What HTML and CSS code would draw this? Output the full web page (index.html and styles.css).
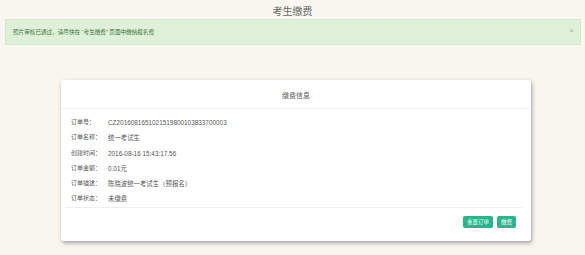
FILE: index.html
```html
<!DOCTYPE html>
<html lang="zh-CN">
<head>
<meta charset="utf-8">
<title>考生缴费</title>
<link rel="stylesheet" href="styles.css">
</head>
<body>
<div class="page-title">考生缴费</div>
<div class="alert">
  <span class="alert-text">照片审核已通过，请尽快在 “考生缴费” 页面中缴纳报名费</span>
  <span class="alert-close">×</span>
</div>
<div class="card-wrap">
  <div class="card">
    <div class="card-header">缴费信息</div>
    <div class="card-body">
      <div class="row"><span class="label">订单号：</span><span class="value">CZ2016081651021519800103833700003</span></div>
      <div class="row"><span class="label">订单名称：</span><span class="value">统一考试生</span></div>
      <div class="row"><span class="label">创建时间：</span><span class="value">2016-08-16 15:43:17.56</span></div>
      <div class="row"><span class="label">订单金额：</span><span class="value">0.01元</span></div>
      <div class="row"><span class="label">订单描述：</span><span class="value">陈晓波统一考试生（预报名）</span></div>
      <div class="row"><span class="label">订单状态：</span><span class="value">未缴费</span></div>
    </div>
    <div class="card-footer">
      <button class="btn">重置订单</button>
      <button class="btn">缴费</button>
    </div>
  </div>
</div>
</body>
</html>
```
FILE: styles.css
```css
html, body {
  margin: 0;
  padding: 0;
}
body {
  background: #f8f6ef;
  font-family: "Liberation Sans", "Noto Sans CJK SC", sans-serif;
  width: 585px;
  height: 255px;
  overflow: hidden;
}
.page-title {
  height: 19px;
  line-height: 21px;
  text-align: center;
  font-size: 10px;
  color: #666;
  font-family: "Noto Sans CJK SC", sans-serif;
}
.alert {
  margin: 0 4px 0 5px;
  height: 24px;
  box-sizing: content-box;
  background: #dff0d8;
  border: 1px solid #d6e9c6;
  color: #3c763d;
  font-size: 5.6px;
  padding: 0 6px 0 7px;
  display: flex;
  align-items: center;
  justify-content: space-between;
}
.alert-close {
  font-size: 8px;
  color: #9ab79a;
  margin-top: -4px;
}
.card-wrap {
  padding-top: 35px;
  padding-left: 61px;
}
.card {
  width: 470px;
  height: 161px;
  background: #fff;
  border-radius: 3px;
  box-shadow: 1px 2px 4px rgba(0, 0, 0, 0.35);
  display: flex;
  flex-direction: column;
}
.card-header {
  height: 28px;
  line-height: 30px;
  border-bottom: 1px solid #eeeeee;
  text-align: center;
  font-size: 7px;
  color: #555;
  font-family: "Noto Sans CJK SC", sans-serif;
}
.card-body {
  margin: 0 8px 0 4px;
  padding: 6px 0 0 6px;
  border-bottom: 1px solid #eeeeee;
}
.row {
  height: 15.3px;
  line-height: 15.3px;
  font-size: 6.4px;
  color: #555;
  display: flex;
}
.label {
  width: 37px;
  font-size: 6px;
}
.value {
  color: #555;
}
.card-footer {
  display: flex;
  justify-content: flex-end;
  gap: 4px;
  padding: 8px 15px 0 0;
}
.btn {
  height: 12px;
  padding: 0 4px;
  border: none;
  border-radius: 2px;
  background: #2ab48c;
  color: #fff;
  font-size: 5.5px;
  font-family: "Noto Sans CJK SC", sans-serif;
  line-height: 12px;
}
```
